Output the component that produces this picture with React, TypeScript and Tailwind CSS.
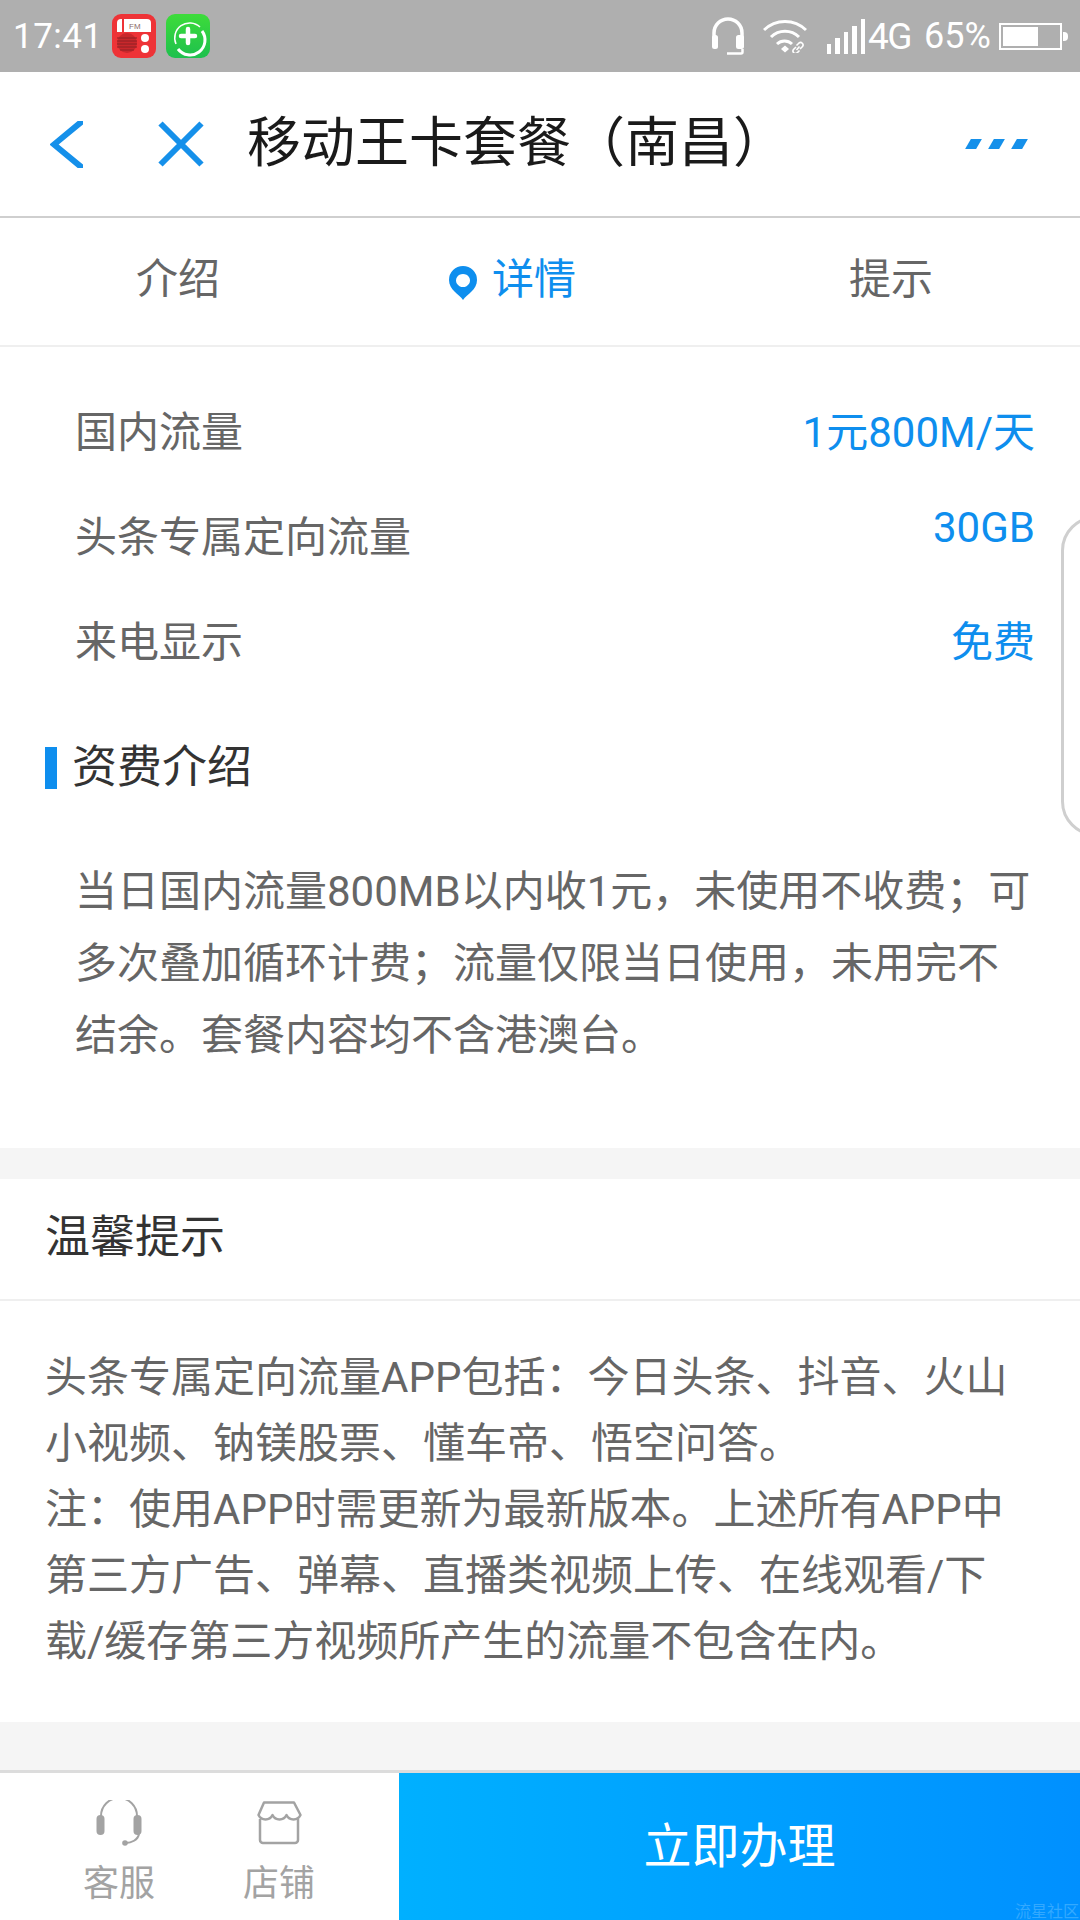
const font = { fontFamily: "Roboto, 'Noto Sans CJK SC', sans-serif" };

const rows = [
  { label: "国内流量", value: "1元800M/天" },
  { label: "头条专属定向流量", value: "30GB" },
  { label: "来电显示", value: "免费" },
];

const FmIcon = () => (
  <svg width="44" height="44" viewBox="0 0 44 44">
    <rect width="44" height="44" rx="9" fill="#ee3337" />
    <path d="M5 18V9a4 4 0 0 1 4-4h26a4 4 0 0 1 4 4v9z" fill="#fff" />
    <rect x="10" y="5" width="2" height="13" fill="#ee3337" />
    <text x="17" y="15" fontSize="8" fill="#8a6a6a" fontFamily="Liberation Sans">FM</text>
    <circle cx="15" cy="29" r="10" fill="#c9282c" />
    <path d="M5 24h20M5 27h20M5 30h20M5 33h20M8 36h14" stroke="#8e2024" strokeWidth="1" />
    <circle cx="33" cy="24" r="4" fill="#fff" />
    <circle cx="33" cy="35" r="4" fill="#fff" />
  </svg>
);

const PlusIcon = () => (
  <svg width="44" height="44" viewBox="0 0 44 44">
    <defs>
      <linearGradient id="g" x1="0" y1="0" x2="0" y2="1">
        <stop offset="0" stopColor="#3ddc3a" />
        <stop offset="1" stopColor="#1ec04e" />
      </linearGradient>
    </defs>
    <rect width="44" height="44" rx="9" fill="url(#g)" />
    <path d="M10 30a15 15 0 0 1 24-17" fill="none" stroke="#fff" strokeWidth="1.500" />
    <path d="M36 17a15 15 0 0 1-24 18" fill="none" stroke="#fff" strokeWidth="3" />
    <path d="M22 15v14M15 22h14" stroke="#fff" strokeWidth="4.500" strokeLinecap="round" />
  </svg>
);

const StatusIcons = () => (
  <div className="flex items-center">
    <svg width="34" height="38" viewBox="0 0 34 38" className="mr-[18px]" fill="none">
      <path d="M3 24V16a14 14 0 0 1 28 0v8" stroke="#fff" strokeWidth="3.500" />
      <rect x="1" y="18" width="6" height="14" rx="2.500" fill="#fff" />
      <rect x="25" y="18" width="8" height="14" rx="2.500" fill="#fff" />
      <path d="M31.500 32v3a1.500 1.500 0 0 1-1.500 1.500H16" stroke="#fff" strokeWidth="2.500" />
    </svg>
    <svg width="44" height="34" viewBox="0 0 44 34" className="mr-[20px]" fill="none" stroke="#fff" strokeWidth="3">
      <path d="M1 11a30 30 0 0 1 42 0" />
      <path d="M8 18a20 20 0 0 1 28 0" />
      <path d="M14 25a11 11 0 0 1 15 0" />
      <path d="M18 30l4-3.500 4 3.500-4 3.500z" fill="#fff" stroke="none" />
      <path d="M33 28l-2.500 2.500a2.500 2.500 0 0 0 3.500 3.500l2.500-2.500M37 30l2.500-2.500a2.500 2.500 0 0 0-3.500-3.500l-2.500 2.500M33.500 31l3-3.500" strokeWidth="1.600" />
    </svg>
    <div className="flex items-end gap-[4px] h-[35px]">
      <div className="w-[4.500px] h-[10px] bg-white" />
      <div className="w-[4.500px] h-[16px] bg-white" />
      <div className="w-[4.500px] h-[22px] bg-white" />
      <div className="w-[4.500px] h-[28px] bg-white" />
      <div className="w-[4.500px] h-[35px] bg-white" />
    </div>
    <span className="ml-[3px] w-[42px] text-[37px] text-white leading-none tracking-[-1.500px]">4G</span>
    <span className="ml-[14px] w-[65px] text-[36px] text-white leading-none whitespace-nowrap">65%</span>
    <div className="ml-[10px] flex items-center">
      <div className="w-[63px] h-[27px] border-[2px] border-white p-[2px] flex">
        <div className="w-[35px] bg-white" />
      </div>
      <div className="ml-[1px] w-[5px] h-[9px] bg-white rounded-r-sm" />
    </div>
  </div>
);

const Headset = () => (
  <svg width="46" height="46" viewBox="0 0 46 46" fill="none">
    <path d="M5 18v-2a18 18 0 0 1 36 0v2" stroke="#a3a3a3" strokeWidth="2" />
    <rect x="0.500" y="15" width="8" height="20" rx="4" fill="#a3a3a3" />
    <rect x="37.500" y="15" width="8" height="20" rx="4" fill="#a3a3a3" />
    <path d="M43 34c-1 6-8 9-13 9" stroke="#a3a3a3" strokeWidth="2" />
    <circle cx="29" cy="43" r="2.800" fill="#a3a3a3" />
  </svg>
);

const Store = () => (
  <svg width="46" height="44" viewBox="0 0 46 44" fill="none" stroke="#a3a3a3" strokeWidth="2.500" strokeLinejoin="round">
    <path d="M8 1.500h30l6.500 12.500c-3 6-11 6-14 0-3 6-11 6-14 0-3 6-11 6-14 0z" />
    <path d="M4 18v21a3 3 0 0 0 3 3h32a3 3 0 0 0 3-3V18" />
  </svg>
);

export default function App() {
  return (
    <div className="relative w-[1080px] h-[1920px] bg-white overflow-hidden flex flex-col" style={font}>
      {/* status bar */}
      <div className="h-[72px] bg-[#afafaf] flex items-center justify-between pl-[13px] pr-[12px]">
        <div className="flex items-center">
          <span className="text-[35px] text-white leading-none w-[99px] tracking-[0.5px]">17:41</span>
          <div className="flex gap-[10px]">
            <FmIcon />
            <PlusIcon />
          </div>
        </div>
        <StatusIcons />
      </div>

      {/* header */}
      <div className="h-[146px] border-b-2 border-[#cfcfcf] flex items-center">
        <svg width="33" height="47" viewBox="0 0 33 47" className="ml-[50px]" fill="none" stroke="#1590ea" strokeWidth="6">
          <path d="M36 -3L4 23.500L36 50" />
        </svg>
        <svg width="46" height="46" viewBox="0 0 46 46" className="ml-[75px]" fill="none" stroke="#1590ea" strokeWidth="6">
          <path d="M2.500 2.500L43.500 43.500M43.500 2.500L2.500 43.500" />
        </svg>
        <h1 className="ml-[43px] text-[54px] font-normal text-[#1a1a1a] leading-none whitespace-nowrap">移动王卡套餐（南昌）</h1>
        <div className="ml-auto mr-[55px] flex gap-[12px]">
          <div className="w-[11px] h-[10px] bg-[#1590ea] -skew-x-[30deg]" />
          <div className="w-[11px] h-[10px] bg-[#1590ea] -skew-x-[30deg]" />
          <div className="w-[11px] h-[10px] bg-[#1590ea] -skew-x-[30deg]" />
        </div>
      </div>

      {/* tabs */}
      <div className="h-[129px] pb-[4px] border-b-2 border-[#efefef] grid grid-cols-[356px_358px_366px] items-center text-[42px] text-[#666666] text-center">
        <div>介绍</div>
        <div className="flex items-center justify-center text-[#0e8eee] pr-[46px]">
          <svg width="30" height="34" viewBox="0 0 30 34" className="mr-[14px] mt-[6px]">
            <path fillRule="evenodd" d="M15 34C11 28 1 24 1 14a14 14 0 0 1 28 0c0 10-10 14-14 20zM15 8a7 6.500 0 1 0 .01 0z" fill="#0e8eee" />
          </svg>
          详情
        </div>
        <div className="pr-[12px]">提示</div>
      </div>

      {/* package rows */}
      <div className="pt-[33px] pl-[75px] pr-[45px] text-[42px]">
        {rows.map((r) => (
          <div key={r.label} className="flex justify-between h-[105px] items-center">
            <span className="text-[#666666]">{r.label}</span>
            <span className={r.value === "30GB" ? "text-[#0e8eee] -translate-y-[10px]" : "text-[#0e8eee]"}>{r.value}</span>
          </div>
        ))}
      </div>

      {/* fee */}
      <div className="mt-[43px] flex items-center h-[60px] pl-[45px]">
        <div className="w-[12px] h-[42px] bg-[#0e8eee]" />
        <h2 className="ml-[15px] text-[45px] font-normal text-[#333333]">资费介绍</h2>
      </div>
      <p className="mt-[58px] pl-[75px] pr-[40px] text-[42px] leading-[72px] text-[#666666]">
        当日国内流量800MB以内收1元，未使用不收费；可多次叠加循环计费；流量仅限当日使用，未用完不结余。套餐内容均不含港澳台。
      </p>

      <div className="mt-[76px] h-[31px] bg-[#f5f5f5]" />

      {/* tips */}
      <div className="h-[122px] border-b-2 border-[#efefef] flex items-center pl-[45px] pb-[2px] text-[45px] text-[#333333]">
        温馨提示
      </div>
      <div className="pt-[44px] pl-[45px] pr-[60px] text-[42px] leading-[66px] text-[#666666]">
        <p>头条专属定向流量APP包括：今日头条、抖音、火山小视频、钠镁股票、懂车帝、悟空问答。</p>
        <p>注：使用APP时需更新为最新版本。上述所有APP中第三方广告、弹幕、直播类视频上传、在线观看/下载/缓存第三方视频所产生的流量不包含在内。</p>
      </div>

      <div className="mt-auto h-[48px] bg-[#f5f5f5]" />

      {/* bottom bar */}
      <div className="h-[150px] border-t-[3px] border-[#dcdcdc] flex">
        <div className="w-[399px] flex pl-[39px]">
          <div className="w-[160px] flex flex-col items-center pt-[27px]">
            <Headset />
            <span className="text-[36px] text-[#a3a3a3] leading-none mt-[20px]">客服</span>
          </div>
          <div className="w-[160px] flex flex-col items-center pt-[28px]">
            <Store />
            <span className="text-[36px] text-[#a3a3a3] leading-none mt-[21px]">店铺</span>
          </div>
        </div>
        <div className="relative flex-1 bg-gradient-to-r from-[#00b0ff] to-[#0090ff] flex items-center justify-center text-[48px] text-white">
          立即办理
          <span className="absolute right-[1px] bottom-[0px] text-[16px] leading-none text-[#33a9ff]">流星社区</span>
        </div>
      </div>

      {/* floating side handle */}
      <div className="absolute right-[-50px] top-[516px] w-[69px] h-[320px] rounded-[38px] border-[3px] border-[#cfcfcf] bg-white" />
    </div>
  );
}
